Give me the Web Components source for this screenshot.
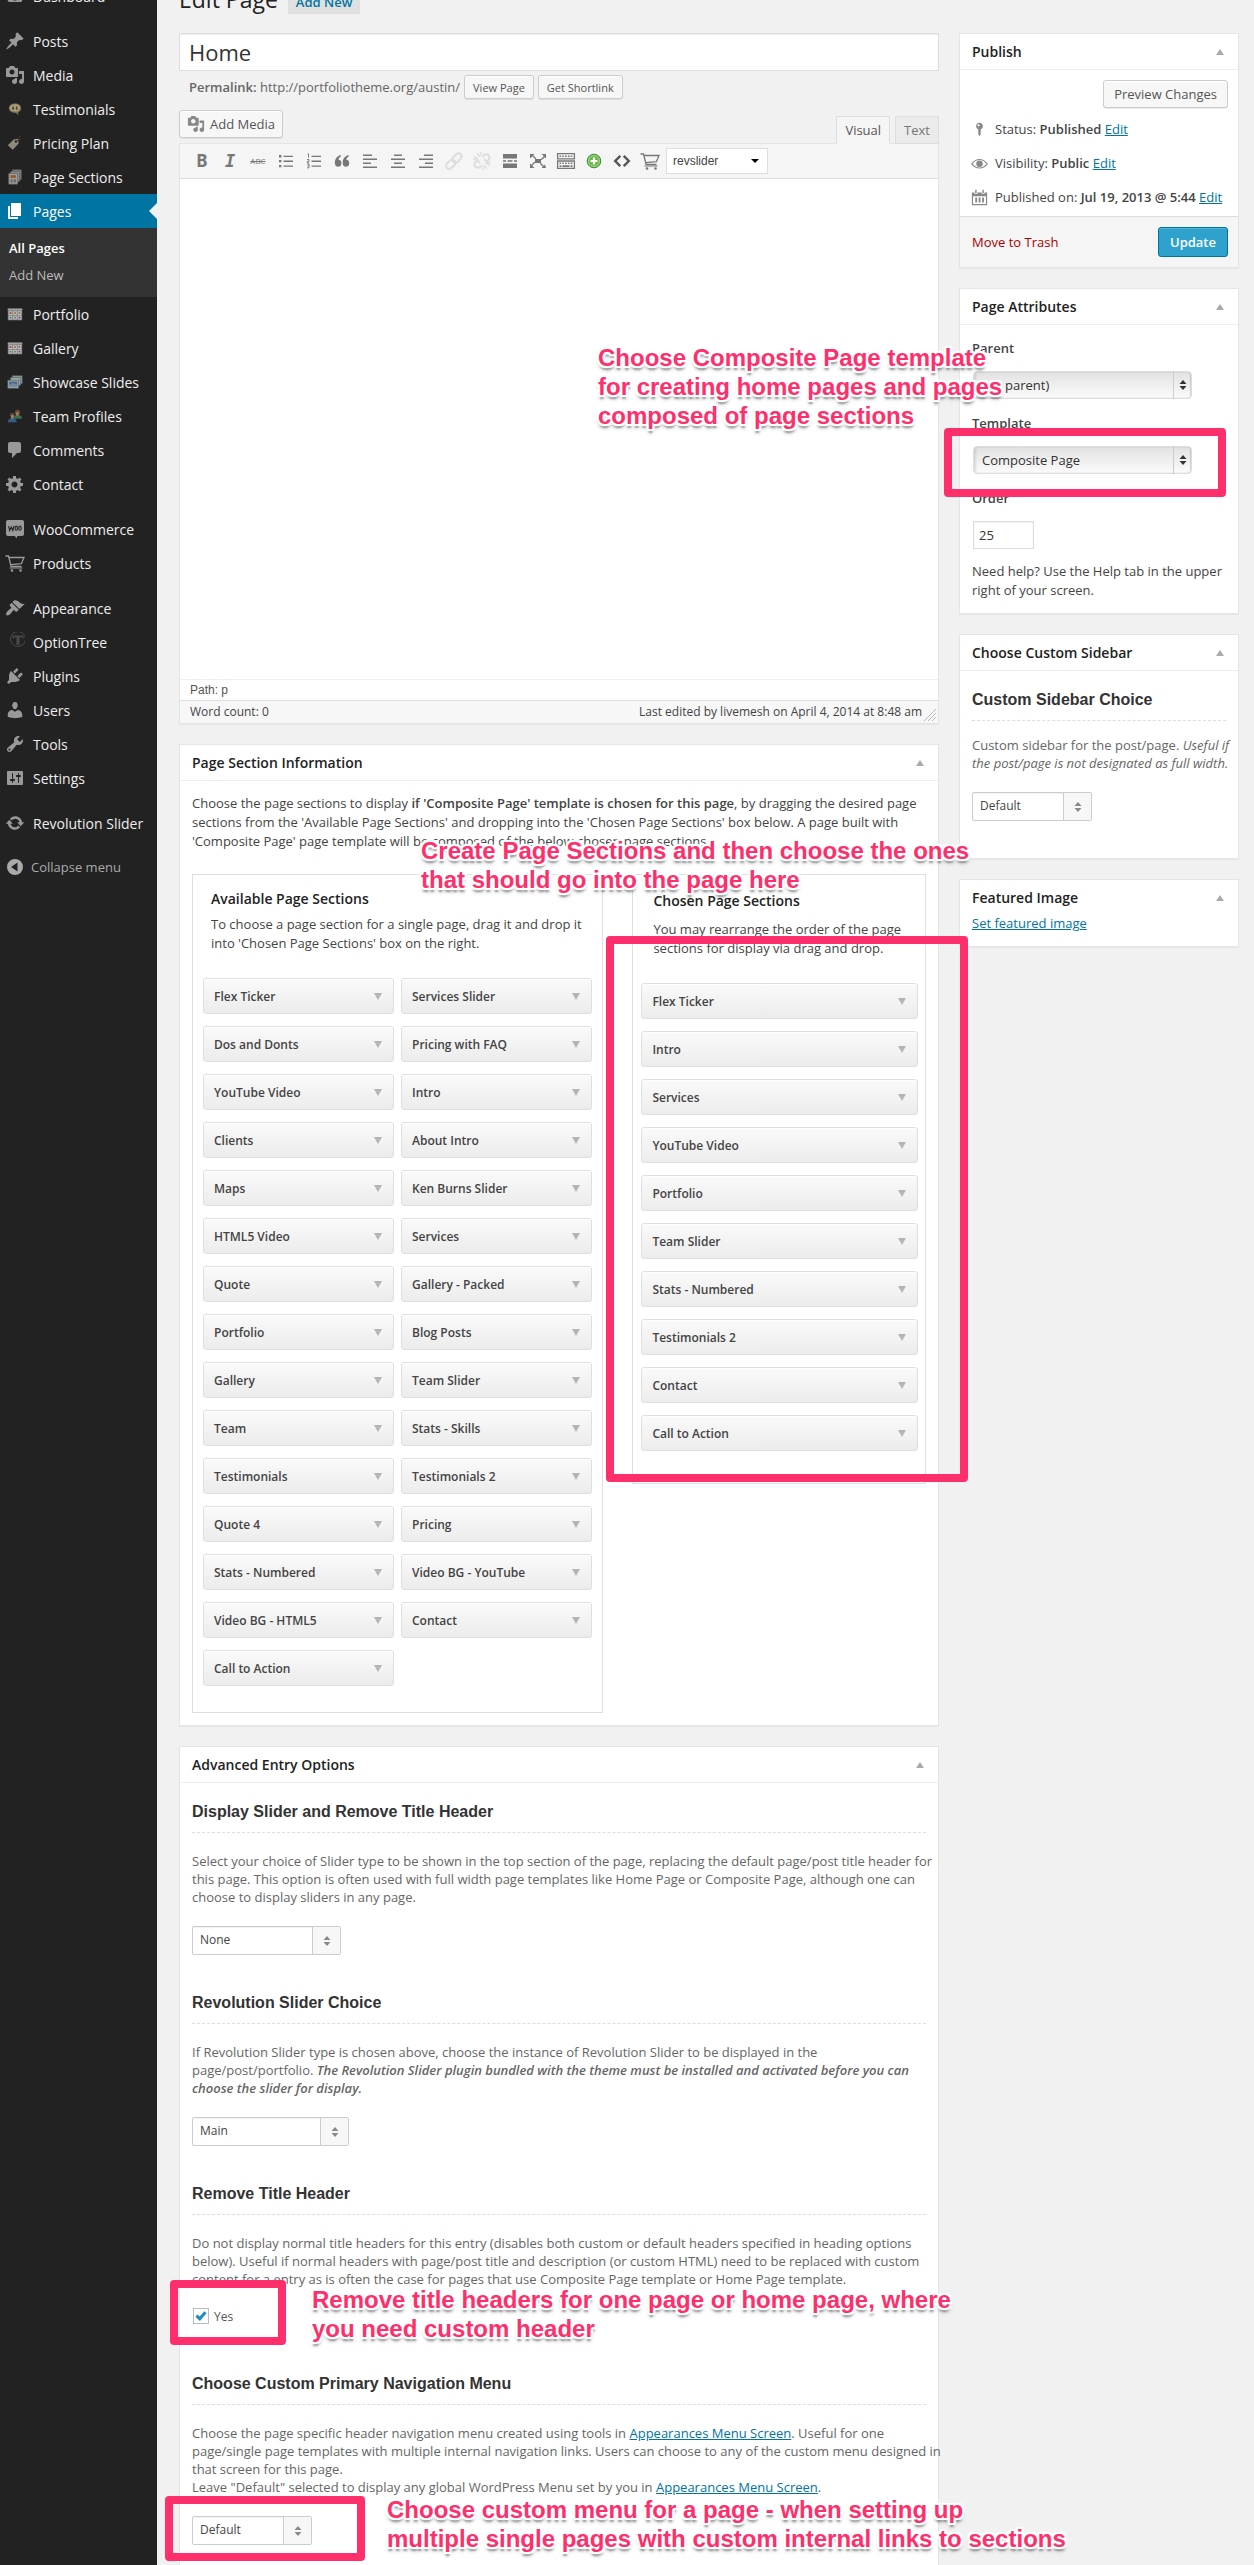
<!DOCTYPE html>
<html lang="en">
<head>
<meta charset="utf-8">
<title>Edit Page</title>
<style>
  body { margin: 0; background: #f1f1f1; color: #444; font: 13px/19px "Open Sans", sans-serif; overflow-x: hidden; }
</style>
</head>
<body>
<edit-screen></edit-screen>

<script>
const BASE = `
  *, *::before, *::after { box-sizing: border-box; }
  :host { display: block; }
  :host([hidden]) { display: none; }
  a { color: #0074a2; }
  b, strong { font-weight: 600; }
  h1, h2, h3, h4, p, ul { margin: 0; padding: 0; }
  button, input, select, textarea { font: inherit; color: inherit; margin: 0; }
`;

/* Registers an element whose shadow root holds the given styles and markup. */
function element(name, css, html) {
  customElements.define(name, class extends HTMLElement {
    constructor() {
      super();
      this.attachShadow({ mode: 'open' });
    }
    connectedCallback() {
      const a = (key, fallback = '') => this.getAttribute(key) ?? fallback;
      const markup = typeof html === 'function' ? html(a, this) : html;
      this.shadowRoot.innerHTML = `<style>${BASE}${css}</style>${markup}`;
    }
  });
}

const CART = '<g fill="none" stroke="currentColor" stroke-width="1.3"><path d="M.5 3h3l2.6 10.500h10.400M4.200 4.500h14.800l-2.600 6.200-10.800 1"/></g><path d="M4.500 14.500h13v1h-13z"/><circle cx="7" cy="17.500" r="1.300"/><circle cx="15.500" cy="17.500" r="1.300"/>';
const GRID = '<path fill="#8d8d8d" d="M2 4h16v13H2z"/><path fill="#b9b9b9" d="M2 4h16v2H2z"/><path fill="#ddd" d="M3 7h4v4H3zM8 7h4v4H8zM13 7h4v4h-4zM3 12h4v4H3zM8 12h4v4H8zM13 12h4v4h-4z"/><path fill="#a34b48" d="M4 8h2v2H4z"/><path fill="#b67a2c" d="M9 8h2v2H9z"/><path fill="#987a58" d="M14 8h2v2h-2z"/><path fill="#4a8a94" d="M4 13h2v2H4z"/><path fill="#81913b" d="M9 13h2v2H9z"/><path fill="#a43c94" d="M14 13h2v2h-2z"/>';

const ICONS = {
  dashboard: '<path d="M3.760 16h12.480c1.100-1.370 1.760-3.110 1.760-5 0-4.420-3.580-8-8-8s-8 3.580-8 8c0 1.890.660 3.630 1.760 5z"/><circle cx="10" cy="12" r="2.500" fill="#222"/>',
  post: '<path d="M10.440 3.020l1.820-1.820 6.360 6.350-1.830 1.820c-1.050-.680-2.480-.570-3.410.360l-.750.750c-.920.930-1.040 2.350-.350 3.410l-1.830 1.820-2.410-2.410-2.800 2.790c-.420.420-3.380 2.710-3.800 2.290s1.860-3.390 2.280-3.810l2.790-2.790L4.100 9.360l1.830-1.820c1.050.690 2.480.570 3.400-.360l.750-.750c.930-.920 1.050-2.350.360-3.410z"/>',
  media: '<path fill-rule="evenodd" d="M13 11V4c0-.550-.450-1-1-1h-1.670L9 1H5L3.670 3H2c-.550 0-1 .450-1 1v7c0 .550.450 1 1 1h10c.550 0 1-.450 1-1zM7 4.500c1.380 0 2.500 1.120 2.500 2.500S8.380 9.500 7 9.500 4.500 8.380 4.500 7 5.620 4.500 7 4.500zM14 6h5v10.500c0 1.380-1.120 2.500-2.500 2.500S14 17.880 14 16.500s1.120-2.500 2.500-2.500c.170 0 .340.020.500.050V9h-3V6zm-4 8.050V13h2v3.500c0 1.380-1.120 2.500-2.500 2.500S7 17.880 7 16.500 8.120 14 9.500 14c.170 0 .340.020.500.050z"/>',
  testimonial: '<path fill="#8f835f" d="M10 4c4.200 0 6.800 2.200 6.800 5.200 0 2.200-1.300 3.900-3.500 4.700l.8 2.700-3.700-2.300C6 14.300 3.200 12.200 3.200 9.200S5.800 4 10 4z"/><ellipse cx="10" cy="8.800" rx="5.600" ry="4" fill="#c0b68c"/><g fill="#4d4325"><circle cx="8" cy="9.500" r="1.200"/><circle cx="12" cy="9.500" r="1.200"/><path d="M7 9.500C6.800 8 7.500 7 8.700 6.800v.8c-.6.2-.8.8-.8 1.500zM11 9.500c-.2-1.500.5-2.500 1.700-2.700v.8c-.6.2-.8.8-.8 1.500z"/></g>',
  price: '<path fill="#a39b8e" fill-rule="evenodd" d="M2 12.500L8.500 6l5-.8.500 5.300-6.500 7zM11 7a1.300 1.300 0 100 2.600A1.300 1.300 0 0011 7z"/><path fill="none" stroke="#493425" stroke-width="1.200" d="M12 7.500c4 0 4.500-1.500 3-3s.5-2.500 2-2"/>',
  sections: '<g stroke="#666" stroke-width=".8"><path fill="#8d9698" d="M7 2h10v11H7z"/><path fill="#a5a8a8" d="M5 4h10v11H5z"/><path fill="#b5b5b0" d="M3 6h10v12H3z"/></g><path fill="#a8642c" d="M5 8h6v3H5z"/><path fill="#777" d="M5 12.500h2.500V16H5zM8.500 12.500H11V16H8.500z"/>',
  page: '<path d="M6 15V2h10v13H6zm-1 1h8v2H3V5h2v11z"/>',
  grid: GRID,
  slides: '<g stroke="#55646c" stroke-width=".7"><path fill="#a8b5b5" d="M7 3h11v9H7z"/><path fill="#b3bdbd" d="M5 5h11v9H5z"/><path fill="#b9c4c4" d="M2 8h12v9H2z"/></g><path fill="#52749f" d="M3.500 9.500h9v5.500h-9z"/><path fill="#809eb9" d="M3.500 13l4-2 5 2v2h-9z"/>',
  team: '<path fill="#3d7e50" d="M8 13c.4-3 2-4 4.800-4s4.700 1 5.200 4z"/><circle cx="12.700" cy="5.800" r="2.800" fill="#855037"/><path fill="#b69079" d="M11.200 6h3v3.500h-3z"/><path fill="#3c65a0" d="M2 17c.4-3.500 2-4.500 4.800-4.500s4.700 1 5.200 4.500z"/><circle cx="7" cy="9" r="2.600" fill="#66513e"/><path fill="#b69079" d="M5.500 9h3v4h-3z"/>',
  comment: '<path d="M5 2h9c1.100 0 2 .900 2 2v7c0 1.100-.900 2-2 2h-2l-5 5v-5H5c-1.100 0-2-.900-2-2V4c0-1.100.900-2 2-2z"/>',
  gear: '<path fill-rule="evenodd" d="M18 12h-2.180c-.170.700-.440 1.350-.810 1.930l1.540 1.540-2.100 2.100-1.540-1.540c-.580.360-1.230.630-1.910.790V19H8v-2.180c-.680-.160-1.330-.430-1.910-.790l-1.540 1.540-2.120-2.120 1.540-1.540c-.360-.580-.630-1.230-.790-1.910H1V9.030h2.170c.160-.700.440-1.350.800-1.940L2.430 5.550l2.100-2.100 1.540 1.540c.580-.370 1.240-.640 1.930-.810V2h3v2.180c.680.160 1.330.430 1.910.790l1.540-1.540 2.120 2.120-1.540 1.540c.360.590.640 1.240.800 1.940H18V12zm-8.500 1.500c1.660 0 3-1.340 3-3s-1.340-3-3-3-3 1.340-3 3 1.340 3 3 3z"/>',
  woo: '<path d="M3 1h14c1.200 0 2 .8 2 2v12c0 1.200-.8 2-2 2h-4.500l-1 2.200-1.800-2.200H3c-1.200 0-2-.8-2-2V3c0-1.200.8-2 2-2z"/><g fill="none" stroke="#222" stroke-width="1.100"><path d="M3.600 7l1 4.500L6.300 8l1.500 3.500L9 7"/><ellipse cx="11.300" cy="9.200" rx="1.200" ry="2.100"/><ellipse cx="15" cy="9.200" rx="1.200" ry="2.100"/></g>',
  cart: CART,
  brush: '<path d="M14.480 11.060L7.410 3.990l1.500-1.500c.500-.560 2.300-.470 3.510.320 1.210.800 1.430 1.280 2.910 2.100 1.180.640 2.450 1.260 4.450.850zm-.710.710L6.700 4.700 4.930 6.470c-.390.390-.390 1.020 0 1.410l1.060 1.060c.390.390.390 1.030 0 1.420-.600.600-1.430 1.110-2.210 1.690-.350.260-.700.530-1.010.840C1.430 14.230.400 16.080 1.400 17.070c.990 1 2.840-.030 4.180-1.360.310-.310.580-.660.850-1.020.570-.780 1.080-1.610 1.690-2.210.390-.390 1.020-.390 1.410 0l1.060 1.060c.390.390 1.020.390 1.410 0z"/>',
  tree: '<g fill="none" stroke="#4b4846"><circle cx="13" cy="7" r="7.500"/></g><path fill="#4b4846" d="M7.500 3.500h11v3.300h-1c0-1-.7-1.600-1.700-1.600h-1.300v6.300c0 .8.400 1 1.300 1.200h-5.600c.9-.2 1.300-.4 1.300-1.200V5.200h-1.300c-1 0-1.700.6-1.700 1.600h-1z"/>',
  plug: '<path d="M13.110 4.360L9.870 7.600 8 5.730l3.240-3.240c.350-.340 1.050-.200 1.560.320.520.510.660 1.210.310 1.550zm-8 1.770l.910-1.120 9.010 9.010-1.190.840c-.710.710-2.630 1.160-3.820 1.160H6.140L4.900 17.260c-.590.590-1.540.590-2.120 0-.590-.580-.590-1.530 0-2.120l1.240-1.240v-3.880c0-1.130.400-3.190 1.090-3.890zm7.260 3.970l3.240-3.240c.340-.350 1.040-.210 1.550.310.520.510.660 1.210.310 1.550l-3.240 3.250z"/>',
  user: '<path d="M10 9.250c-2.270 0-2.730-3.440-2.730-3.440C7 4.020 7.820 2 9.970 2c2.160 0 2.980 2.020 2.710 3.810 0 0-.410 3.440-2.680 3.440zm0 2.570L12.720 10c2.390 0 4.520 2.330 4.520 4.530v2.490s-3.650 1.130-7.240 1.130c-3.650 0-7.240-1.130-7.240-1.130v-2.490c0-2.250 1.940-4.480 4.470-4.480z"/>',
  wrench: '<path fill-rule="evenodd" d="M16.680 9.770c-1.340 1.340-3.300 1.670-4.950.990l-5.410 6.520c-.990.990-2.590.990-3.580 0s-.990-2.590 0-3.570l6.520-5.420c-.680-1.650-.350-3.610.990-4.950 1.280-1.280 3.120-1.620 4.720-1.060l-2.890 2.890 2.820 2.820 2.860-2.870c.530 1.580.180 3.390-1.080 4.650zM3.810 16.210c.400.390 1.040.390 1.430 0 .400-.400.400-1.040 0-1.430-.390-.400-1.030-.400-1.430 0-.390.390-.390 1.030 0 1.430z"/>',
  sliders: '<path fill-rule="evenodd" d="M18 16V4c0-.550-.450-1-1-1H3c-.550 0-1 .450-1 1v12c0 .550.450 1 1 1h14c.550 0 1-.450 1-1zM8 11h1c.550 0 1 .450 1 1s-.450 1-1 1H8v1.500c0 .280-.220.500-.500.500s-.500-.220-.500-.500V13H6c-.550 0-1-.450-1-1s.450-1 1-1h1V5.500c0-.280.220-.500.500-.500s.500.220.500.500V11zm5-2h-1c-.550 0-1-.450-1-1s.450-1 1-1h1V5.500c0-.280.220-.500.500-.500s.500.220.500.500V7h1c.550 0 1 .450 1 1s-.450 1-1 1h-1v5.500c0 .280-.220.500-.500.500s-.500-.220-.500-.500V9z"/>',
  update: '<path d="M10.200 3.280c3.530 0 6.430 2.610 6.920 6h2.080l-3.500 4-3.500-4h2.320c-.450-1.970-2.210-3.450-4.320-3.450-1.450 0-2.730.710-3.540 1.780L4.950 5.660C6.230 4.200 8.110 3.280 10.200 3.280zm-.400 13.440c-3.520 0-6.430-2.610-6.920-6H.8l3.500-4c1.170 1.330 2.330 2.670 3.500 4H5.480c.450 1.970 2.210 3.450 4.320 3.450 1.450 0 2.730-.710 3.540-1.780l1.710 1.950c-1.280 1.460-3.150 2.380-5.250 2.380z"/>',
  collapse: '<path fill-rule="evenodd" d="M10 2a8 8 0 100 16 8 8 0 000-16zm2.500 3.500v9L6 10z"/>',
  pin: '<path fill-rule="evenodd" d="M10 2a4 4 0 00-1.400 7.700V16l1.400 2 1.400-2V9.700A4 4 0 0010 2zM9 3.800a1.300 1.300 0 110 2.600 1.300 1.300 0 010-2.600z"/>',
  eye: '<path fill="none" stroke="currentColor" stroke-width="1.300" d="M1 10.500C6 3.500 14 3.500 19 10.500 14 17 6 17 1 10.500z"/><circle cx="10" cy="10.300" r="3.800"/>',
  calendar: '<path fill-rule="evenodd" d="M1 4h18v15H1zm1.400 4.500v9.100h15.200V8.500z"/><path d="M5 10h2.200v6H5zM9 10h2.200v6H9zM13 10h2.200v6H13z"/><path fill="#fff" d="M4 1h3.500v4.500H4zM12.500 1H16v4.500h-3.500z"/><path d="M4.900 1h1.700v3.800H4.900zM13.400 1h1.700v3.800h-1.700z"/>',
  ul: '<path d="M3 4h2.400v2.400H3zM3 8.900h2.400v2.400H3zM3 13.900h2.400v2.400H3zM7.500 4.700H17V6H7.500zM7.500 9.600H17v1.300H7.500zM7.500 14.500H17v1.300H7.500z"/>',
  ol: '<path d="M7.500 4.700H17V6H7.500zM7.500 9.600H17v1.300H7.500zM7.500 14.500H17v1.300H7.500z"/><g fill="none" stroke="currentColor" stroke-width=".9"><path d="M3.500 3.500l1-.8v4M3 8.500h2v1.800H3.300v1.500h2M3 13h2v3.800H3M3.500 14.800H5"/></g>',
  quote: '<path d="M9 10.200c0-.3 0 0 0 0C8.500 9 7.300 8.900 6.600 9 6.700 7.200 7.600 6 9.200 5.300L8.500 4C5 5.200 2.700 8 2.900 12.200c.1 2.300 1.500 3.600 3.300 3.600 1.900 0 3.200-1.300 3.200-3.200 0-.9-.1-1.700-.4-2.400zM16.800 10.200C16.300 9 15.100 8.900 14.400 9c.1-1.800 1-3 2.600-3.700L16.300 4c-3.500 1.200-5.800 4-5.600 8.200.1 2.300 1.500 3.600 3.300 3.600 1.900 0 3.200-1.300 3.200-3.200 0-.9-.1-1.700-.4-2.400z"/>',
  left: '<path d="M3 3.500h9v1.600H3zM3 7.500h14v1.600H3zM3 11.500h8v1.600H3zM3 15.400h14V17H3z"/>',
  center: '<path d="M6 3.500h8v1.600H6zM3 7.500h14v1.600H3zM6 11.500h8v1.600H6zM3 15.400h14V17H3z"/>',
  right: '<path d="M8 3.500h9v1.600H8zM3 7.500h14v1.600H3zM9 11.500h8v1.600H9zM3 15.400h14V17H3z"/>',
  link: '<g fill="none" stroke="currentColor" stroke-width="2" transform="rotate(-45 10 10)"><rect x="0" y="6.800" width="10.500" height="6.400" rx="3.200"/><rect x="9" y="6.800" width="10.500" height="6.400" rx="3.200"/></g>',
  unlink: '<g fill="none" stroke="currentColor" stroke-width="2"><path d="M8 12l-2.500-2.500c-2.500 1-3.800 3.300-2.500 5.600 1.700 2.500 5.400 2 6-1M12 8l2.500 2.500c2.500-1 3.800-3.300 2.500-5.600-1.700-2.500-5.400-2-6 1"/><path stroke-width="1.300" d="M5 2l3 4M2 5l4 3M9 1v4M1 8h4M15 18l-3-4M18 15l-4-3M11 19v-4M19 12h-4"/></g>',
  more: '<path d="M3 3h14v4.500H3zM3 9.200h3v1.600H3zM7.500 9.200h5v1.600h-5zM14 9.200h3v1.600h-3zM3 12.500h14V17H3z"/>',
  expand: '<path d="M7 8h6v4H7zM2 3h4.500L5.200 4.300l3 3-.9.900-3-3L2 7.500zM18 3v4.500l-1.300-1.300-3 3-.9-.9 3-3L13.500 3zM2 17v-4.500l1.300 1.300 3-3 .9.900-3 3L6.500 17zM18 17h-4.500l1.300-1.300-3-3 .9-.9 3 3 1.300-1.300z"/>',
  keyboard: '<g fill="none" stroke="currentColor" stroke-width="1.300"><path d="M1.600 2.600h16.800v5.200H1.600zM1.600 10h16.800v7.400H1.600z"/></g><g stroke="currentColor" stroke-width="1.500" stroke-dasharray="1.600 1.200"><path d="M3.500 5.200h13M3.500 12.300h13"/></g><path d="M3.500 14.300h2V16h-2zM6.500 14.300h7V16h-7zM14.500 14.300h2V16h-2z"/>',
  add: '<circle cx="10" cy="10" r="6.800" fill="#6cb84c" stroke="#3f8a34"/><circle cx="10" cy="10" r="5.500" fill="none" stroke="#a9dc8f"/><path fill="#fff" d="M8.900 6.500h2.200v2.400h2.400v2.200h-2.400v2.400H8.900v-2.400H6.500V8.900h2.400z"/>',
  code: '<path fill="none" stroke="#555" stroke-width="2.400" d="M8.300 4.800L3.200 10l5.100 5.200M11.700 4.800l5.100 5.200-5.100 5.200"/>',
};

element('wp-icon', `
  :host { display: block; flex: none; width: 20px; height: 20px; }
  svg { display: block; width: 100%; height: 100%; fill: currentColor; }
`, a => `<svg viewBox="0 0 20 20" aria-hidden="true">${ICONS[a('name')]}</svg>`);

/* ---------- admin menu ---------- */
element('menu-item', `
  a { display: flex; align-items: center; height: 34px; padding-left: 5px; color: #eee; font-size: 14px; font-weight: 500; text-decoration: none; white-space: nowrap; }
  wp-icon { color: #999; margin-right: 8px; }
  wp-icon.tint { width: 18px; height: 18px; margin: 0 9px 0 1px; opacity: .85; }
  :host([current]) a { background: #0074a2; color: #fff; }
  :host([current]) wp-icon { color: #fff; }
  .notch { margin-left: auto; border: 8px solid transparent; border-left: 0; border-right-color: #f1f1f1; }
`, (a, el) => `<a href="#"><wp-icon class="${el.hasAttribute('tint') ? 'tint' : ''}" name="${a('icon')}"></wp-icon><slot></slot>${el.hasAttribute('current') ? '<span class="notch"></span>' : ''}</a>`);

element('admin-menu', `
  :host { width: 157px; flex: none; background: #222; padding-top: 12px; }
  .gap { height: 11px; }
  .sub { background: #333; padding: 7px 0 8px; }
  .sub a { display: block; height: 27px; line-height: 27px; padding-left: 9px; color: #bbb; text-decoration: none; }
  .sub a:first-child { color: #fff; font-weight: 600; }
  .collapse { display: flex; align-items: center; gap: 6px; width: 100%; height: 34px; margin-top: 10px; padding: 0 0 0 5px; border: 0; background: none; color: #aaa; }
`, `
  <nav>
    <menu-item icon="dashboard">Dashboard</menu-item>
    <div class="gap"></div>
    <menu-item icon="post">Posts</menu-item>
    <menu-item icon="media">Media</menu-item>
    <menu-item tint icon="testimonial">Testimonials</menu-item>
    <menu-item tint icon="price">Pricing Plan</menu-item>
    <menu-item tint icon="sections">Page Sections</menu-item>
    <menu-item icon="page" current>Pages</menu-item>
    <div class="sub"><a href="#">All Pages</a><a href="#">Add New</a></div>
    <menu-item tint icon="grid">Portfolio</menu-item>
    <menu-item tint icon="grid">Gallery</menu-item>
    <menu-item tint icon="slides">Showcase Slides</menu-item>
    <menu-item tint icon="team">Team Profiles</menu-item>
    <menu-item icon="comment">Comments</menu-item>
    <menu-item icon="gear">Contact</menu-item>
    <div class="gap"></div>
    <menu-item icon="woo">WooCommerce</menu-item>
    <menu-item icon="cart">Products</menu-item>
    <div class="gap"></div>
    <menu-item icon="brush">Appearance</menu-item>
    <menu-item icon="tree">OptionTree</menu-item>
    <menu-item icon="plug">Plugins</menu-item>
    <menu-item icon="user">Users</menu-item>
    <menu-item icon="wrench">Tools</menu-item>
    <menu-item icon="sliders">Settings</menu-item>
    <div class="gap"></div>
    <menu-item icon="update">Revolution Slider</menu-item>
  </nav>
  <button class="collapse"><wp-icon name="collapse"></wp-icon>Collapse menu</button>
`);

/* ---------- shared controls ---------- */
element('wp-button', `
  :host { display: inline-block; flex: none; }
  button { display: flex; align-items: center; gap: 5px; height: 28px; padding: 0 10px; border: 1px solid #ccc; border-radius: 3px; background: #f7f7f7; color: #555; box-shadow: inset 0 1px 0 #fff, 0 1px 0 rgba(0,0,0,.08); white-space: nowrap; }
  :host([small]) button { height: 24px; padding: 0 8px; font-size: 11px; }
  :host([icon]) button { padding: 0 7px; }
  :host([primary]) button { height: 30px; padding: 0 11px; background: #2ea2cc; border-color: #0074a2; color: #fff; font-weight: 600; box-shadow: inset 0 1px 0 rgba(120,200,230,.5); }
  wp-icon { width: 18px; height: 18px; color: #888; }
`, a => `<button type="button">${a('icon') ? `<wp-icon name="${a('icon')}"></wp-icon>` : ''}<slot></slot></button>`);

element('post-box', `
  :host { background: #fff; border: 1px solid #e5e5e5; box-shadow: 0 1px 1px rgba(0,0,0,.04); }
  header { display: flex; justify-content: space-between; align-items: center; height: 36px; padding: 0 14px 0 12px; border-bottom: 1px solid #eee; }
  :host([plain]) header { border-color: transparent; }
  h3 { font-size: 14px; font-weight: 600; line-height: 20px; color: #222; }
  button { border: 0; padding: 0; background: none; display: block; }
  button::before { content: ""; display: block; border: 4px solid transparent; border-top: 0; border-bottom: 6px solid #aaa; }
  .body { padding: 0 12px; }
`, a => `<header><h3>${a('heading')}</h3><button type="button" aria-label="Toggle"></button></header><div class="body"><slot></slot></div>`);

const SPIN = '<svg viewBox="0 0 8 10" width="8" height="10" aria-hidden="true"><path d="M4 0l3.500 4h-7zM4 10l3.500-4h-7z"/></svg>';

/* A titled option: dashed heading, description slot, and a select or a tick box. */
element('option-field', `
  :host { padding-bottom: 37px; }
  h4 { font: bold 16px/20px "Liberation Sans", Arial, sans-serif; color: #333; padding-bottom: 10px; border-bottom: 1px dashed #ddd; }
  .desc { margin: var(--desc-gap, 19px) -12px 20px 0; line-height: 18px; color: #666; white-space: nowrap; }
  .pick { display: grid; width: var(--pick, 120px); height: 29px; }
  .pick > * { grid-area: 1 / 1; }
  select { appearance: none; height: 29px; width: 100%; padding: 0 36px 2px 7px; border: 1px solid #ccc; border-radius: 2px; background: #fff; color: #444; font-size: 12px; box-shadow: inset 0 1px 1px rgba(0,0,0,.05); }
  .spin { justify-self: end; display: flex; align-items: center; justify-content: center; width: 28px; margin: 1px; border-left: 1px solid #ccc; background: #f7f7f7; pointer-events: none; }
  svg { fill: #888; }
  .tick { display: flex; align-items: flex-start; gap: 5px; height: 28px; font-size: 12px; color: #555; line-height: 17px; }
  .tick input { appearance: none; width: 16px; height: 16px; margin-left: 1px; border: 1px solid #bbb; background: #fff; display: grid; place-items: center; }
  .tick input:checked::before { content: ""; width: 6px; height: 10px; margin-bottom: 3px; border: solid #1e8cbe; border-width: 0 3px 3px 0; transform: rotate(42deg); }
`, a => a('type') === 'tick'
  ? `<h4>${a('heading')}</h4><div class="desc"><slot></slot></div><label class="tick"><input type="checkbox" checked>${a('value')}</label>`
  : `<h4><label for="pick">${a('heading')}</label></h4><div class="desc"><slot></slot></div><div class="pick"><select id="pick"><option>${a('value')}</option></select><span class="spin">${SPIN}</span></div>`);

/* ---------- editor ---------- */
const TOOLS = ['bold', 'italic', 'strike', 'ul', 'ol', 'quote', 'left', 'center', 'right', 'link', 'unlink', 'more', 'expand', 'keyboard', 'add', 'code', 'cart'];
const GLYPHS = { bold: 'B', italic: 'I', strike: 'ABC' };

element('page-editor', `
  .top { display: flex; justify-content: space-between; height: 33px; }
  .tabs { display: flex; gap: 5px; align-self: flex-end; margin-bottom: -1px; position: relative; }
  .tabs button { height: 28px; padding: 0 8px; border: 1px solid #dedede; background: #ebebeb; color: #777; }
  .tabs button.on { background: #f5f5f5; border-bottom-color: #f5f5f5; color: #555; }
  .frame { border: 1px solid #e5e5e5; background: #fff; box-shadow: 0 1px 1px rgba(0,0,0,.04); }
  .bar { display: flex; align-items: center; height: 35px; padding-left: 8px; background: #f5f5f5; border-bottom: 1px solid #dedede; }
  .bar button { display: grid; place-items: center; width: 28px; height: 26px; padding: 0; border: 0; background: none; color: #777; }
  .bar wp-icon { width: 20px; height: 20px; }
  .bar .link, .bar .unlink { color: #ddd; }
  .bar .bold { font: bold 17px/20px "Noto Sans", sans-serif; }
  .bar .italic { font: italic bold 17px/20px "DejaVu Sans Mono", monospace; }
  .bar .strike { font-size: 8px; line-height: 12px; text-decoration: line-through; }
  .bar select { appearance: none; width: 102px; height: 26px; margin-left: 2px; padding: 0 20px 0 6px; border: 1px solid #dedede; border-radius: 0; color: #444; background: #fff; font: 12px "Liberation Sans", sans-serif; }
  .drop { display: grid; align-items: center; }
  .drop > * { grid-area: 1 / 1; }
  .drop i { justify-self: end; margin-right: 9px; border: 4px solid transparent; border-top-color: #000; border-bottom: 0; pointer-events: none; }
  textarea { display: block; width: 100%; height: 500px; border: 0; padding: 12px; resize: none; outline: 0; background: #fff; }
  .path { height: 21px; padding-left: 10px; border-top: 1px solid #eee; font: 12px/20px "Liberation Sans", Arial, sans-serif; color: #555; }
  .status { display: flex; height: 23px; padding: 0 2px 0 10px; border-top: 1px solid #dedede; background: #f7f7f7; font-size: 12px; line-height: 21px; }
  .status span:nth-child(2) { margin-left: auto; }
  .status svg { align-self: flex-end; margin: 0 0 2px 2px; }
`, `
  <div class="top">
    <wp-button icon="media">Add Media</wp-button>
    <div class="tabs"><button type="button" class="on">Visual</button><button type="button">Text</button></div>
  </div>
  <div class="frame">
    <div class="bar">
      ${TOOLS.map(t => `<button type="button" class="${t}" aria-label="${t}">${GLYPHS[t] ? GLYPHS[t] : `<wp-icon name="${t}"></wp-icon>`}</button>`).join('')}
      <div class="drop"><select aria-label="revslider"><option>revslider</option></select><i></i></div>
    </div>
    <textarea aria-label="Content"></textarea>
    <div class="path">Path: p</div>
    <div class="status"><span>Word count: 0</span><span>Last edited by livemesh on April 4, 2014 at 8:48 am</span>
      <svg width="12" height="12" viewBox="0 0 12 12" stroke="#bbb" aria-hidden="true"><path d="M0 12L12 0M4 12l8-8M8 12l4-4"/></svg></div>
  </div>
`);

/* ---------- page sections ---------- */
element('section-card', `
  div { display: flex; justify-content: space-between; align-items: center; height: 36px; padding: 0 11px 0 10px; border: 1px solid #dfdfdf; border-radius: 3px; background: linear-gradient(#fafafa, #ececec); box-shadow: inset 0 1px 0 #fff; color: #444; font-size: 12px; font-weight: 600; white-space: nowrap; }
  button { display: block; border: 0; padding: 0; background: none; }
  button::before { content: ""; display: block; border: 4px solid transparent; border-bottom: 0; border-top: 7px solid #b5b5b5; }
`, `<div><slot></slot><button type="button" aria-label="Expand"></button></div>`);

element('section-list', `
  :host { border: 1px solid #dfdfdf; }
  .intro { padding: 0 var(--inset); }
  h4 { font-size: 14px; font-weight: 600; line-height: 20px; color: #222; }
  p { margin: var(--intro-gap) 0 25px; }
  .cards { display: grid; grid-template-columns: repeat(var(--cols), 1fr); gap: 12px 7px; }
`, a => `<div class="intro"><h4>${a('heading')}</h4><p>${a('text')}</p></div>
  <div class="cards">${a('items').split('|').map(i => `<section-card>${i}</section-card>`).join('')}</div>`);

element('sections-panel', `
  :host { padding: 13px 0 12px; }
  .lists { display: flex; justify-content: space-between; align-items: flex-start; margin-top: 23px; }
  .all { width: 56%; padding: 14px 10px 26px; --inset: 8px; --intro-gap: 6px; --cols: 2; }
  .chosen { width: 40%; padding: 16px 7px 32px 8px; --inset: 12px; --intro-gap: 9px; --cols: 1; }
`, `
  <p>Choose the page sections to display <b>if 'Composite Page' template is chosen for this page</b>, by dragging the desired page sections from the 'Available Page Sections' and dropping into the 'Chosen Page Sections' box below. A page built with 'Composite Page' page template will be composed of the below chosen page sections.</p>
  <div class="lists">
    <section-list class="all" heading="Available Page Sections" text="To choose a page section for a single page, drag it and drop it into 'Chosen Page Sections' box on the right."
      items="Flex Ticker|Services Slider|Dos and Donts|Pricing with FAQ|YouTube Video|Intro|Clients|About Intro|Maps|Ken Burns Slider|HTML5 Video|Services|Quote|Gallery - Packed|Portfolio|Blog Posts|Gallery|Team Slider|Team|Stats - Skills|Testimonials|Testimonials 2|Quote 4|Pricing|Stats - Numbered|Video BG - YouTube|Video BG - HTML5|Contact|Call to Action"></section-list>
    <section-list class="chosen" heading="Chosen Page Sections" text="You may rearrange the order of the page sections for display via drag and drop."
      items="Flex Ticker|Intro|Services|YouTube Video|Portfolio|Team Slider|Stats - Numbered|Testimonials 2|Contact|Call to Action"></section-list>
  </div>
`);

/* ---------- right column ---------- */
element('publish-panel', `
  :host { margin: 0 -12px; }
  .preview { display: flex; justify-content: flex-end; padding: 10px 10px 4px; }
  .row { display: flex; align-items: center; height: 34px; padding-left: 11px; white-space: nowrap; }
  wp-icon { width: 17px; height: 17px; margin-right: 7px; color: #888; }
  footer { display: flex; justify-content: space-between; align-items: center; margin-top: 2px; padding: 10px 10px 10px 12px; border-top: 1px solid #ddd; background: #f5f5f5; }
  footer a { color: #a00; text-decoration: none; }
`, `
  <div class="preview"><wp-button>Preview Changes</wp-button></div>
  <div class="row"><wp-icon name="pin"></wp-icon><span>Status: <b>Published</b> <a href="#">Edit</a></span></div>
  <div class="row"><wp-icon name="eye"></wp-icon><span>Visibility: <b>Public</b> <a href="#">Edit</a></span></div>
  <div class="row"><wp-icon name="calendar"></wp-icon><span>Published on: <b>Jul 19, 2013 @ 5:44</b> <a href="#">Edit</a></span></div>
  <footer><a href="#">Move to Trash</a><wp-button primary>Update</wp-button></footer>
`);

element('attributes-panel', `
  :host { padding: 14px 0 13px; }
  label { display: block; font-weight: 600; line-height: 18px; margin-bottom: 14px; }
  .pick { display: grid; width: 219px; height: 28px; margin: 0 0 15px 1px; }
  .pick > * { grid-area: 1 / 1; }
  select { appearance: none; width: 100%; height: 28px; padding: 0 24px 0 8px; border: 1px solid #ddd; border-radius: 4px; background: linear-gradient(#e2e2e2, #fbfbfb); box-shadow: inset 2px 0 2px rgba(0,0,0,.1), inset -1px 0 1px rgba(0,0,0,.15); color: #333; }
  .spin { justify-self: end; display: flex; align-items: center; width: 19px; padding-left: 5px; border-left: 1px solid #ccc; pointer-events: none; }
  svg { width: 8px; height: 12px; fill: #333; }
  input { width: 61px; height: 28px; margin-left: 1px; padding: 0 5px; border: 1px solid #ddd; color: #333; box-shadow: inset 0 1px 2px rgba(0,0,0,.07); display: block; }
  p { margin-top: 13px; }
`, `
  <label for="parent">Parent</label>
  <div class="pick"><select id="parent"><option>(no parent)</option></select><span class="spin">${SPIN}</span></div>
  <label for="template">Template</label>
  <div class="pick"><select id="template"><option>Composite Page</option></select><span class="spin">${SPIN}</span></div>
  <label for="order">Order</label>
  <input id="order" type="text" value="25">
  <p>Need help? Use the Help tab in the upper right of your screen.</p>
`);

/* ---------- callouts lying over the screen ---------- */
element('call-out', `
  :host { position: absolute; left: var(--x); top: var(--y); font: bold 24px/29px "Liberation Sans", Arial, sans-serif; color: #ff2f6b; white-space: nowrap;
    text-shadow: 0 -2px #fff, 0 2px #fff, -2px 0 #fff, 2px 0 #fff, -2px -2px 1px #fff, 2px -2px 1px #fff, -2px 2px 1px #fff, 2px 2px 1px #fff,
      0 4px 2px rgba(0,0,0,.35), 0 4px 4px rgba(0,0,0,.25); }
`, `<slot></slot>`);

element('call-frame', `
  :host { position: absolute; left: var(--x); top: var(--y); width: var(--w); height: var(--h); border: 8px solid #ff2f6b; border-radius: 4px; pointer-events: none; }
`, '');

/* ---------- screen ---------- */
element('edit-screen', `
  :host { position: relative; }
  .app { display: flex; align-items: stretch; margin-top: -33px; min-height: 100vh; }
  main { flex: 1; min-width: 0; display: grid; grid-template-columns: minmax(0, 1fr) 280px; grid-template-rows: auto 1fr; gap: 19px 20px; padding: 18px 15px 0 22px; }
  .title { grid-column: 1 / 3; display: flex; align-items: flex-end; gap: 10px; height: 29px; }
  h2 { font-size: 23px; font-weight: 400; line-height: 29px; color: #222; }
  .title a { height: 24px; padding: 0 8px; line-height: 24px; border-radius: 2px; background: #e0e0e0; font-weight: 600; text-decoration: none; }
  .side { display: flex; flex-direction: column; gap: 20px; }
  .name { display: block; width: 100%; height: 38px; padding: 0 9px; border: 1px solid #ddd; background: #fff; box-shadow: inset 0 1px 2px rgba(0,0,0,.07); color: #333; font-size: 22px; }
  .permalink { display: flex; align-items: center; gap: 4px; margin: 4px 0 11px; padding-left: 10px; color: #666; }
  .cols post-box { margin-top: 20px; }
  .options { border-bottom: 0; }
  .options option-field { padding-bottom: 38px; }
  .options option-field:first-child, .choice option-field { padding-top: 19px; }
  .options option-field:last-child { padding-bottom: 20px; }
  .choice option-field { --desc-gap: 15px; }
  .featured { padding-bottom: 13px; }
  .featured p { margin-top: -2px; }
`, `
  <div class="app">
    <admin-menu></admin-menu>
    <main>
      <div class="title"><h2>Edit Page</h2><a href="#">Add New</a></div>
      <div class="cols">
        <input class="name" type="text" value="Home" aria-label="Title">
        <div class="permalink"><span><b>Permalink:</b> http://portfoliotheme.org/austin/</span><wp-button small>View Page</wp-button><wp-button small>Get Shortlink</wp-button></div>
        <page-editor></page-editor>
        <post-box heading="Page Section Information"><sections-panel></sections-panel></post-box>
        <post-box class="options" heading="Advanced Entry Options">
          <option-field heading="Display Slider and Remove Title Header" value="None" style="--pick:149px">Select your choice of Slider type to be shown in the top section of the page, replacing the default page/post title header for<br>this page. This option is often used with full width page templates like Home Page or Composite Page, although one can<br>choose to display sliders in any page.</option-field>
          <option-field heading="Revolution Slider Choice" value="Main" style="--pick:157px">If Revolution Slider type is chosen above, choose the instance of Revolution Slider to be displayed in the<br>page/post/portfolio. <strong><em>The Revolution Slider plugin bundled with the theme must be installed and activated before you can<br>choose the slider for display.</em></strong></option-field>
          <option-field type="tick" heading="Remove Title Header" value="Yes">Do not display normal title headers for this entry (disables both custom or default headers specified in heading options<br>below). Useful if normal headers with page/post title and description (or custom HTML) need to be replaced with custom<br>content for a entry as is often the case for pages that use Composite Page template or Home Page template.</option-field>
          <option-field heading="Choose Custom Primary Navigation Menu" value="Default">Choose the page specific header navigation menu created using tools in <a href="#">Appearances Menu Screen</a>. Useful for one<br>page/single page templates with multiple internal navigation links. Users can choose to any of the custom menu designed in<br>that screen for this page.<br>Leave "Default" selected to display any global WordPress Menu set by you in <a href="#">Appearances Menu Screen</a>.</option-field>
        </post-box>
      </div>
      <div class="side">
        <post-box heading="Publish"><publish-panel></publish-panel></post-box>
        <post-box heading="Page Attributes"><attributes-panel></attributes-panel></post-box>
        <post-box class="choice" heading="Choose Custom Sidebar">
          <option-field heading="Custom Sidebar Choice" value="Default">Custom sidebar for the post/page. <em>Useful if<br>the post/page is not designated as full width.</em></option-field>
        </post-box>
        <post-box plain class="featured" heading="Featured Image"><p><a href="#">Set featured image</a></p></post-box>
      </div>
    </main>
  </div>
  <call-out style="--x:598px;--y:376px">Choose Composite Page template<br>for creating home pages and pages<br>composed of page sections</call-out>
  <call-frame style="--x:944px;--y:461px;--w:282px;--h:69px"></call-frame>
  <call-out style="--x:421px;--y:869px">Create Page Sections and then choose the ones<br>that should go into the page here</call-out>
  <call-frame style="--x:606px;--y:969px;--w:362px;--h:546px"></call-frame>
  <call-frame style="--x:170px;--y:2313px;--w:116px;--h:65px"></call-frame>
  <call-out style="--x:312px;--y:2318px">Remove title headers for one page or home page, where<br>you need custom header</call-out>
  <call-frame style="--x:165px;--y:2529px;--w:200px;--h:65px"></call-frame>
  <call-out style="--x:387px;--y:2528px">Choose custom menu for a page - when setting up<br>multiple single pages with custom internal links to sections</call-out>
`);
</script>
</body>
</html>
